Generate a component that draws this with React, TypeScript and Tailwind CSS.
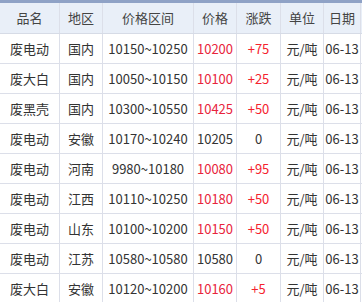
import React from 'react';

interface Row {
  name: string;
  area: string;
  range: string;
  price: string;
  change: string;
}

const rows: Row[] = [
  { name: '废电动', area: '国内', range: '10150~10250', price: '10200', change: '+75' },
  { name: '废大白', area: '国内', range: '10050~10150', price: '10100', change: '+25' },
  { name: '废黑壳', area: '国内', range: '10300~10550', price: '10425', change: '+50' },
  { name: '废电动', area: '安徽', range: '10170~10240', price: '10205', change: '0' },
  { name: '废电动', area: '河南', range: '9980~10180', price: '10080', change: '+95' },
  { name: '废电动', area: '江西', range: '10110~10250', price: '10180', change: '+50' },
  { name: '废电动', area: '山东', range: '10100~10200', price: '10150', change: '+50' },
  { name: '废电动', area: '江苏', range: '10580~10580', price: '10580', change: '0' },
  { name: '废大白', area: '安徽', range: '10120~10200', price: '10160', change: '+5' },
];

const cols = 'grid grid-cols-[60px_43px_91px_43px_44px_43px_37px]';
const cell = 'flex items-center justify-center border-r border-[#dcdfe9] whitespace-nowrap overflow-visible';

const App = () => {
  return (
    <div
      className="w-[362px] h-[302px] overflow-hidden bg-white text-[13px] text-[#333]"
      style={{ fontFamily: '"Noto Sans CJK SC", "Noto Sans", sans-serif' }}
    >
      <div className="h-[3px] bg-[#8fa2c6]" />
      <div className={`${cols} h-[31px] bg-[#e9eff8] border-b border-[#d6dbe6]`}>
        {['品名', '地区', '价格区间', '价格', '涨跌', '单位', '日期'].map(h => (
          <div key={h} className={`${cell} text-[#444]`}>{h}</div>
        ))}
      </div>
      {rows.map((r, i) => {
        const up = r.change !== '0';
        return (
          <div key={i} className={`${cols} h-[30px] border-b border-[#dcdfe9]`}>
            <div className={cell}>{r.name}</div>
            <div className={cell}>{r.area}</div>
            <div className={cell}>{r.range}</div>
            <div className={`${cell} ${up ? 'text-[#e8243c]' : ''}`}>{r.price}</div>
            <div className={`${cell} ${up ? 'text-[#f5222d]' : ''}`}>{r.change}</div>
            <div className={cell}>元/吨</div>
            <div className={cell}>06-13</div>
          </div>
        );
      })}
    </div>
  );
};

export default App;
